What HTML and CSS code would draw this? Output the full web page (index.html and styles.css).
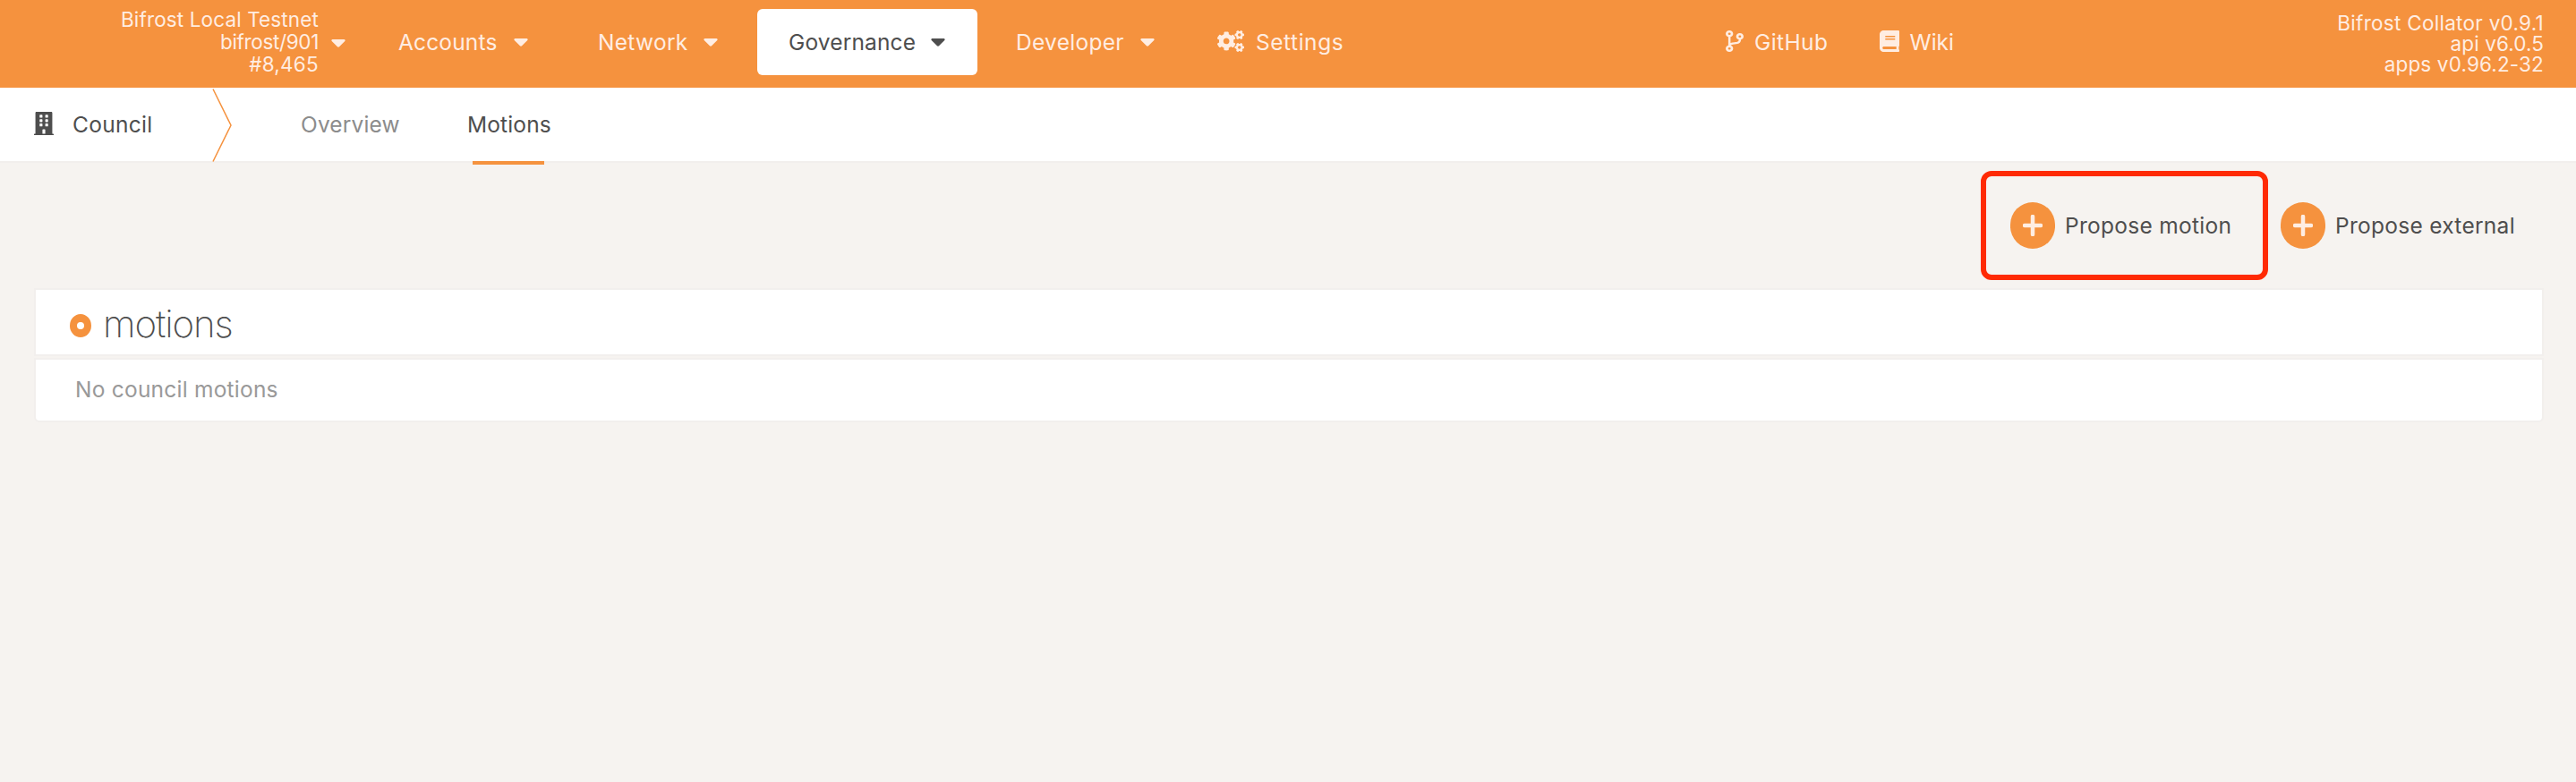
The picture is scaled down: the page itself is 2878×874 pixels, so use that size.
FILE: index.html
```html
<!DOCTYPE html>
<html lang="en">
<head>
<meta charset="utf-8">
<title>Council motions</title>
<link rel="stylesheet" href="styles.css">
</head>
<body>
<header class="topbar">
  <div class="chain">
    <div class="chain-info"><div class="t-chain">Bifrost Local Testnet</div><div class="t-spec">bifrost/901</div><div class="t-block">#8,465</div></div>
    <svg class="caret" viewBox="0 0 16 9"><path d="M1.5 0h13a1.200 1.200 0 0 1 .8 2L9 8.200a1.500 1.500 0 0 1-2 0L.7 2a1.200 1.200 0 0 1 .8-2z"/></svg>
  </div>
  <nav class="menu">
    <a class="item accounts"><span class="t-acc">Accounts</span><svg class="caret" viewBox="0 0 16 9"><path d="M1.500 0h13a1.200 1.200 0 0 1 .8 2L9 8.200a1.500 1.500 0 0 1-2 0L.7 2a1.200 1.200 0 0 1 .8-2z"/></svg></a>
    <a class="item network"><span class="t-net">Network</span><svg class="caret" viewBox="0 0 16 9"><path d="M1.500 0h13a1.200 1.200 0 0 1 .8 2L9 8.200a1.500 1.500 0 0 1-2 0L.7 2a1.200 1.200 0 0 1 .8-2z"/></svg></a>
    <a class="item governance active"><span class="t-gov">Governance</span><svg class="caret" viewBox="0 0 16 9"><path d="M1.500 0h13a1.200 1.200 0 0 1 .8 2L9 8.200a1.500 1.500 0 0 1-2 0L.7 2a1.200 1.200 0 0 1 .8-2z"/></svg></a>
    <a class="item developer"><span class="t-dev">Developer</span><svg class="caret" viewBox="0 0 16 9"><path d="M1.500 0h13a1.200 1.200 0 0 1 .8 2L9 8.200a1.500 1.500 0 0 1-2 0L.7 2a1.200 1.200 0 0 1 .8-2z"/></svg></a>
    <a class="item settings"><svg class="ico-cogs" viewBox="0 0 640 512"><path d="M512.100 191l-8.200 14.300c-3 5.300-9.400 7.500-15.100 5.400-11.800-4.400-22.600-10.700-32.100-18.600-4.600-3.800-5.800-10.500-2.800-15.700l8.200-14.300c-6.900-8-12.300-17.300-15.900-27.400h-16.500c-6 0-11.200-4.300-12.200-10.300-2-12-2.100-24.600 0-37.100 1-6 6.200-10.400 12.200-10.400h16.500c3.600-10.100 9-19.400 15.900-27.400l-8.200-14.300c-3-5.200-1.900-11.900 2.800-15.700 9.500-7.900 20.400-14.200 32.100-18.600 5.700-2.100 12.100.1 15.100 5.400l8.200 14.300c10.500-1.900 21.200-1.900 31.700 0L552 6.300c3-5.300 9.400-7.500 15.100-5.400 11.800 4.400 22.600 10.700 32.100 18.600 4.600 3.800 5.800 10.500 2.800 15.700l-8.200 14.300c6.900 8 12.300 17.300 15.900 27.400h16.500c6 0 11.200 4.300 12.200 10.300 2 12 2.100 24.600 0 37.100-1 6-6.200 10.400-12.200 10.400h-16.500c-3.600 10.100-9 19.400-15.900 27.400l8.200 14.300c3 5.200 1.900 11.900-2.800 15.700-9.500 7.900-20.400 14.200-32.100 18.600-5.700 2.100-12.100-.1-15.100-5.400l-8.200-14.300c-10.400 1.900-21.200 1.900-31.700 0zm-10.500-58.800c38.500 29.600 82.400-14.300 52.800-52.800-38.500-29.700-82.400 14.300-52.800 52.800zM386.300 286.100l33.700 16.800c10.100 5.800 14.500 18.100 10.500 29.100-8.900 24.200-26.400 46.400-42.600 65.800-7.400 8.900-20.200 11.100-30.300 5.300l-29.100-16.800c-16 13.700-34.600 24.600-54.900 31.700v33.600c0 11.600-8.300 21.600-19.700 23.600-24.600 4.200-50.400 4.400-75.900 0-11.500-2-20-11.900-20-23.600V418c-20.300-7.200-38.900-18-54.900-31.700L74 403c-10 5.800-22.900 3.600-30.300-5.300-16.200-19.400-33.300-41.600-42.200-65.700-4-10.900.4-23.200 10.500-29.100l33.300-16.800c-3.900-20.900-3.900-42.400 0-63.400L12 205.800c-10.100-5.800-14.600-18.100-10.500-29 8.900-24.200 26-46.400 42.200-65.800 7.400-8.900 20.200-11.100 30.300-5.300l29.100 16.800c16-13.700 34.600-24.600 54.900-31.700V57.100c0-11.500 8.200-21.500 19.600-23.500 24.600-4.200 50.500-4.400 76-.1 11.500 2 20 11.900 20 23.600v33.600c20.300 7.200 38.900 18 54.900 31.700l29.100-16.800c10-5.800 22.900-3.600 30.300 5.300 16.200 19.400 33.200 41.600 42.100 65.800 4 10.900.1 23.200-10 29.100l-33.700 16.800c3.900 21 3.900 42.500 0 63.500zm-117.600 21.100c59.200-77-28.700-164.900-105.700-105.700-59.200 77 28.700 164.900 105.700 105.700zm243.400 182.700l-8.200 14.300c-3 5.300-9.400 7.500-15.100 5.400-11.800-4.400-22.600-10.700-32.100-18.600-4.600-3.800-5.800-10.500-2.800-15.700l8.200-14.300c-6.900-8-12.300-17.300-15.900-27.400h-16.500c-6 0-11.200-4.300-12.200-10.300-2-12-2.100-24.600 0-37.100 1-6 6.200-10.400 12.200-10.400h16.500c3.600-10.100 9-19.400 15.900-27.400l-8.200-14.300c-3-5.200-1.900-11.900 2.800-15.700 9.500-7.900 20.400-14.200 32.100-18.600 5.700-2.100 12.100.1 15.100 5.400l8.200 14.300c10.500-1.900 21.200-1.900 31.700 0l8.200-14.300c3-5.300 9.400-7.500 15.100-5.400 11.800 4.400 22.600 10.700 32.100 18.600 4.600 3.800 5.800 10.500 2.800 15.700l-8.200 14.300c6.900 8 12.300 17.300 15.900 27.400h16.500c6 0 11.200 4.300 12.200 10.300 2 12 2.100 24.600 0 37.100-1 6-6.200 10.400-12.200 10.400h-16.500c-3.600 10.100-9 19.400-15.900 27.400l8.200 14.300c3 5.200 1.900 11.900-2.800 15.700-9.500 7.900-20.400 14.200-32.100 18.600-5.700 2.100-12.100-.1-15.100-5.400l-8.200-14.300c-10.400 1.900-21.200 1.900-31.700 0zM501.600 431c38.500 29.600 82.400-14.300 52.800-52.800-38.500-29.600-82.400 14.300-52.800 52.800z"/></svg><span class="t-set">Settings</span></a>
  </nav>
  <nav class="links">
    <a class="item github"><svg class="ico-branch" viewBox="0 0 384 512" preserveAspectRatio="none"><path d="M384 144c0-44.200-35.800-80-80-80s-80 35.800-80 80c0 36.400 24.300 67.100 57.500 76.800-.6 16.100-4.200 28.500-11 36.900-15.400 19.200-49.300 22.400-85.200 25.700-28.200 2.600-57.400 5.400-81.300 16.900v-144c32.500-10.200 56-40.500 56-76.300 0-44.200-35.800-80-80-80S0 35.800 0 80c0 35.800 23.500 66.100 56 76.300v199.300C23.500 365.900 0 396.200 0 432c0 44.200 35.800 80 80 80s80-35.800 80-80c0-34-21.200-63.100-51.200-74.600 3.100-5.200 7.800-9.800 14.900-13.400 16.200-8.200 40.400-10.400 66.100-12.800 42.200-3.900 90-8.400 118.200-43.400 14-17.400 21.100-39.800 21.600-67.900 31.600-10.800 54.400-40.700 54.400-75.900zM80 52a28 28 0 1 1 0 56 28 28 0 0 1 0-56zM80 404a28 28 0 1 1 0 56 28 28 0 0 1 0-56zM304 116a28 28 0 1 1 0 56 28 28 0 0 1 0-56z" fill-rule="evenodd"/></svg><span class="t-git">GitHub</span></a>
    <a class="item wiki"><svg class="ico-book" viewBox="0 0 448 512" preserveAspectRatio="none"><path d="M448 360V24c0-13.300-10.700-24-24-24H96C43 0 0 43 0 96v320c0 53 43 96 96 96h328c13.300 0 24-10.700 24-24v-16c0-7.500-3.500-14.300-8.900-18.700-4.200-15.400-4.200-59.300 0-74.700 5.400-4.300 8.900-11.100 8.900-18.600zM128 134c0-3.300 2.700-6 6-6h212c3.300 0 6 2.700 6 6v20c0 3.300-2.700 6-6 6H134c-3.300 0-6-2.700-6-6v-20zm0 64c0-3.300 2.700-6 6-6h212c3.300 0 6 2.700 6 6v20c0 3.300-2.700 6-6 6H134c-3.300 0-6-2.700-6-6v-20zm253.400 250H96c-17.700 0-32-14.300-32-32 0-17.600 14.400-32 32-32h285.400c-1.900 17.100-1.900 46.900 0 64z"/></svg><span class="t-wiki">Wiki</span></a>
  </nav>
  <div class="versions"><div class="t-v1">Bifrost Collator v0.9.1</div><div class="t-v2">api v6.0.5</div><div class="t-v3">apps v0.96.2-32</div></div>
</header>
<nav class="tabs">
  <div class="tab-title"><svg class="ico-building" viewBox="0 0 448 512" preserveAspectRatio="none"><path d="M436 480h-20V24c0-13.255-10.745-24-24-24H56C42.745 0 32 10.745 32 24v456H12c-6.627 0-12 5.373-12 12v20h448v-20c0-6.627-5.373-12-12-12zM128 76c0-6.627 5.373-12 12-12h40c6.627 0 12 5.373 12 12v40c0 6.627-5.373 12-12 12h-40c-6.627 0-12-5.373-12-12V76zm0 96c0-6.627 5.373-12 12-12h40c6.627 0 12 5.373 12 12v40c0 6.627-5.373 12-12 12h-40c-6.627 0-12-5.373-12-12v-40zm52 148h-40c-6.627 0-12-5.373-12-12v-40c0-6.627 5.373-12 12-12h40c6.627 0 12 5.373 12 12v40c0 6.627-5.373 12-12 12zm76 160h-64v-84c0-6.627 5.373-12 12-12h40c6.627 0 12 5.373 12 12v84zm64-172c0 6.627-5.373 12-12 12h-40c-6.627 0-12-5.373-12-12v-40c0-6.627 5.373-12 12-12h40c6.627 0 12 5.373 12 12v40zm0-96c0 6.627-5.373 12-12 12h-40c-6.627 0-12-5.373-12-12v-40c0-6.627 5.373-12 12-12h40c6.627 0 12 5.373 12 12v40zm0-96c0 6.627-5.373 12-12 12h-40c-6.627 0-12-5.373-12-12V76c0-6.627 5.373-12 12-12h40c6.627 0 12 5.373 12 12v40z"/></svg><span class="t-council">Council</span></div>
  <svg class="chevron" viewBox="0 0 24 82"><path d="M2 1.500L22 42L2 82.500"/></svg>
  <a class="tab overview"><span class="t-over">Overview</span></a>
  <a class="tab motions"><span class="t-mot">Motions</span><i class="underline"></i></a>
</nav>
<main>
  <div class="actions">
    <button class="action boxed"><span class="plus"><svg viewBox="0 0 22 24"><path d="M11 2v20M2 12h18"/></svg></span><span class="t-pm">Propose motion</span></button>
    <button class="action external"><span class="plus"><svg viewBox="0 0 22 24"><path d="M11 2v20M2 12h18"/></svg></span><span class="t-pe">Propose external</span></button>
  </div>
  <section class="table">
    <h1 class="row head"><i class="ring"></i><span class="t-head">motions</span></h1>
    <div class="row empty"><span class="t-empty">No council motions</span></div>
  </section>
</main>
</body>
</html>
```
FILE: styles.css
```css
* { box-sizing: border-box; }
body { margin: 0; min-height: 874px; background: #f6f3f0; color: #4e4e4e; font: 24.500px/32px Inter, "Liberation Sans", sans-serif; letter-spacing: 0.15px; }
span, .chain-info div, .versions div { white-space: nowrap; }
svg { display: block; flex: none; fill: currentColor; }
.topbar { display: flex; height: 98px; background: #f5923e; color: #ffede2; }
.chain { display: flex; width: 386px; }
.chain-info { width: 356px; padding-top: 9px; text-align: right; font-size: 22.500px; line-height: 25px; }
.t-chain { letter-spacing: 0.13px; }
.t-spec { letter-spacing: -0.35px; }
.t-block { letter-spacing: 0.25px; }
.chain .caret { margin: 44px 0 0 14px; }
.caret { width: 16px; height: 9px; }
.menu, .links { display: flex; align-items: flex-start; }
.item { display: flex; align-items: center; height: 74px; margin-top: 10px; }
.accounts { margin-left: 59px; width: 145px; justify-content: space-between; }
.network { margin-left: 78px; width: 134px; justify-content: space-between; letter-spacing: 0.3px; }
.governance { margin-left: 44px; width: 246px; padding: 0 36px 0 35px; justify-content: space-between; }
.active { background: #fff; color: #4e4e4e; border-radius: 6px; }
.developer { margin-left: 43px; width: 155px; justify-content: space-between; letter-spacing: 0.3px; }
.settings { margin-left: 70px; gap: 13px; width: 142px; letter-spacing: 0.55px; }
.ico-cogs { width: 30px; height: 24px; margin-top: -2px; }
.links { margin-left: 426px; width: 255px; justify-content: space-between; }
.github, .wiki { gap: 12px; }
.github { letter-spacing: 0.4px; }
.wiki { letter-spacing: 0; }
.ico-branch { width: 20px; height: 24px; margin-top: -2px; }
.ico-book { width: 22px; height: 24px; margin-top: -2px; }
.versions { margin-left: auto; margin-right: 36px; padding-top: 14px; text-align: right; font-size: 22.500px; line-height: 23px; }
.t-v1 { letter-spacing: 0.28px; }
.t-v2 { letter-spacing: 0.1px; }
.tabs { display: flex; height: 82px; background: #fff; }
.tab-title { display: flex; align-items: center; gap: 21px; width: 236px; padding-left: 38px; letter-spacing: 0.3px; }
.ico-building { width: 22px; height: 26px; margin-top: -2px; }
.chevron { width: 24px; height: 82px; overflow: visible; fill: none; stroke: #f5923e; stroke-width: 1.500; }
.tab { display: flex; align-items: center; position: relative; }
.overview { margin-left: 76px; width: 186px; color: #8c8c8c; }
.underline { position: absolute; left: 6px; bottom: -4px; width: 80px; height: 4px; background: #f5923e; }
.actions { display: flex; height: 144px; padding-left: 2213px; padding-top: 9px; border-top: 2px solid #f2efed; }
.action { display: flex; align-items: center; height: 122px; padding: 0; border: 0; background: none; color: inherit; font: inherit; letter-spacing: 0.28px; gap: 11px; }
.boxed { width: 321px; border: 6px solid #ff2a04; border-radius: 12px; padding-left: 27px; }
.external { margin-left: 14px; }
.plus { display: flex; align-items: center; justify-content: center; width: 50px; height: 52px; border-radius: 25px; background: #f5923e; color: #ffede2; }
.plus svg { width: 22px; height: 24px; stroke: currentColor; stroke-width: 4.500; stroke-linecap: round; }
.table { margin: -2px 36px 0 38px; }
.row { display: flex; align-items: center; margin: 0; background: #fff; border: 2px solid #f2efed; }
.head { height: 76px; padding-left: 38px; gap: 13px; font-size: 42px; font-weight: 200; line-height: 50px; letter-spacing: -1.100px; }
.t-head { padding-top: 3px; }
.ring { width: 24px; height: 26px; margin-top: 8px; border: 8px solid #f5923e; border-width: 9px 8px; border-radius: 50%; }
.empty { height: 72px; margin-top: 2px; padding: 0 0 2px 44px; color: #999; border-radius: 0 0 6px 6px; letter-spacing: 0.23px; }
```
